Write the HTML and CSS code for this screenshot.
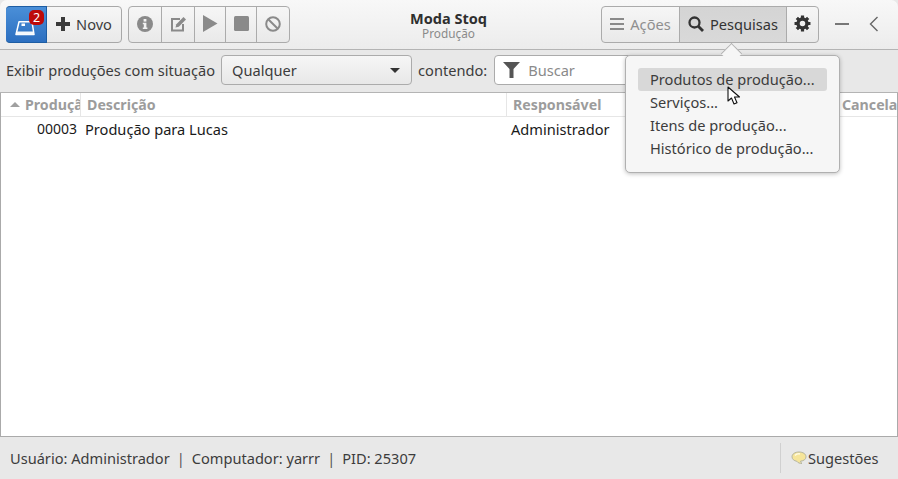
FILE: index.html
```html
<!DOCTYPE html>
<html lang="pt">
<head>
<meta charset="utf-8">
<title>Moda Stoq</title>
<link rel="stylesheet" href="styles.css">
</head>
<body>
<div class="window">
  <header class="titlebar">
    <div class="linked launcher">
      <button class="btn btn-blue" aria-label="Lançador">
        <svg width="20" height="16" viewBox="0 0 20 16" class="ico-launch"><path d="M4 1.800H17L19 14.500H1z" fill="none" stroke="#fff" stroke-width="1.500" stroke-linejoin="round"/><path d="M2 11.500H18V14.500H1.500z" fill="#f4f8fc"/><rect x="6.500" y="3.500" width="3.500" height="2.500" fill="#fff"/></svg>
        <span class="badge">2</span>
      </button>
      <button class="btn btn-new">
        <svg width="14" height="14" viewBox="0 0 14 14"><path d="M5 0h4v5h5v4H9v5H5V9H0V5h5z" fill="#3a3a3a"/></svg>
        <span>Novo</span>
      </button>
    </div>
    <div class="linked actions">
      <button class="btn a1" aria-label="Detalhes"><svg width="16" height="16" viewBox="0 0 16 16"><circle cx="8" cy="8" r="8" fill="#8a8a8a"/><rect x="6.600" y="3" width="2.800" height="2.600" fill="#f2f2f2"/><path d="M5.800 6.800H9.400V11.500H10.400V13H5.800V11.500H6.800V8.200H5.800z" fill="#f2f2f2"/></svg></button>
      <button class="btn a2" aria-label="Editar"><svg width="17" height="16" viewBox="0 0 17 16"><path d="M10 3H2v11.500h11V8" fill="none" stroke="#8a8a8a" stroke-width="2"/><path d="M5.500 11.500l.8-3.200L13.500 1l2.500 2.400-7.200 7.300z" fill="#8a8a8a"/></svg></button>
      <button class="btn a3" aria-label="Iniciar"><svg width="15" height="17" viewBox="0 0 15 17"><path d="M0 0L14.500 8.500L0 17z" fill="#8a8a8a"/></svg></button>
      <button class="btn a4" aria-label="Parar"><svg width="15" height="15" viewBox="0 0 15 15"><rect width="15" height="15" rx="1.500" fill="#8a8a8a"/></svg></button>
      <button class="btn a5" aria-label="Cancelar"><svg width="16" height="16" viewBox="0 0 16 16"><circle cx="8" cy="8" r="6.800" fill="none" stroke="#8a8a8a" stroke-width="2"/><path d="M3.200 3.200L12.800 12.800" stroke="#8a8a8a" stroke-width="2"/></svg></button>
    </div>
    <div class="title">
      <strong>Moda Stoq</strong>
      <span>Produção</span>
    </div>
    <div class="linked menus">
      <button class="btn m1"><svg width="14" height="12" viewBox="0 0 14 12"><path d="M0 1h14M0 6h14M0 11h14" stroke="#8a8a8a" stroke-width="2"/></svg><span class="dim">Ações</span></button>
      <button class="btn m2 active"><svg width="16" height="16" viewBox="0 0 16 16"><circle cx="6.500" cy="6.500" r="5" fill="none" stroke="#333" stroke-width="2.300"/><path d="M10 10l5 5" stroke="#333" stroke-width="2.800"/></svg><span>Pesquisas</span></button>
      <button class="btn m3" aria-label="Preferências"><svg width="17" height="17" viewBox="0 0 16 16"><circle cx="8" cy="8" r="4.200" fill="none" stroke="#333" stroke-width="3.200"/><path d="M8 .5V3.500M8 12.500V15.500M.5 8H3.500M12.500 8H15.500M2.700 2.700L4.800 4.800M11.200 11.200L13.300 13.300M13.300 2.700L11.200 4.800M4.800 11.200L2.700 13.300" fill="none" stroke="#333" stroke-width="3"/></svg></button>
    </div>
    <div class="winctl">
      <svg width="14" height="2" viewBox="0 0 14 2"><rect width="14" height="2" fill="#777"/></svg>
      <svg width="10" height="16" viewBox="0 0 10 16"><path d="M8.500 1L1.500 8l7 7" fill="none" stroke="#666" stroke-width="1.400"/></svg>
    </div>
  </header>

  <div class="filterbar">
    <label>Exibir produções com situação</label>
    <div class="combo"><span>Qualquer</span><i class="caret"></i></div>
    <label>contendo:</label>
    <div class="entry">
      <svg width="17" height="16" viewBox="0 0 17 16"><path d="M0 0H17L10.500 7V16H6.500V7z" fill="#555"/></svg>
      <span>Buscar</span>
    </div>
  </div>

  <div class="tree">
    <div class="tree-head">
      <div class="col c1"><i class="sort"></i><span class="clip">Produção</span></div>
      <div class="col c2"><span>Descrição</span></div>
      <div class="col c3"><span>Responsável</span></div>
      <div class="col c4"><span>Cancelada</span></div>
    </div>
    <div class="tree-row">
      <div class="cell c1 num">00003</div>
      <div class="cell c2">Produção para Lucas</div>
      <div class="cell c3">Administrador</div>
      <div class="cell c4"></div>
    </div>
  </div>

  <footer class="status">
    <div class="status-text">Usuário: Administrador<span class="bar">|</span>Computador: yarrr<span class="bar">|</span>PID: 25307</div>
    <div class="feedback">
      <svg width="16" height="14" viewBox="0 0 16 14"><path d="M8 1C4 1 1 3 1 5.800c0 2.200 2 4 4.800 4.500 1 1.500 3 2.200 5.200 2.200-.9-.6-1.400-1.400-1.500-2.300C13 9.900 15 8 15 5.800 15 3 12 1 8 1z" fill="#f6e59a" stroke="#b5b5a0"/><path d="M4 4.500c1-1.200 3-1.800 5-1.600" fill="none" stroke="#fffbe0" stroke-width="1.500"/></svg>
      <span>Sugestões</span>
    </div>
  </footer>

  <div class="popover">
    <i class="arrow"></i>
    <div class="pop-item hover">Produtos de produção...</div>
    <div class="pop-item">Serviços...</div>
    <div class="pop-item">Itens de produção...</div>
    <div class="pop-item">Histórico de produção...</div>
  </div>

  <svg class="cursor" width="14" height="20" viewBox="0 0 14 20"><path d="M1 1V15L4.500 12L7 18L10 16.700L7.500 11H12.500z" fill="#fff" stroke="#111" stroke-width="1.100" stroke-linejoin="round"/></svg>
</div>
</body>
</html>
```

FILE: styles.css
```css
* { box-sizing: border-box; }
html, body { margin: 0; padding: 0; }
body {
  width: 898px;
  height: 479px;
  overflow: hidden;
  background: #fff;
  font-family: "Noto Sans", "Open Sans", sans-serif;
  font-size: 14.600px;
  color: #3c3c3c;
}
.window {
  position: relative;
  width: 898px;
  height: 479px;
  display: flex;
  flex-direction: column;
  background: #e8e8e8;
  overflow: hidden;
}
.titlebar {
  height: 50px;
  flex: none;
  display: flex;
  align-items: flex-start;
  padding: 6px 0 0 6px;
  border-bottom: 1px solid #b4b4b4;
  border-radius: 7px 7px 0 0;
  background: linear-gradient(#f8f8f8, #ececec);
}
.linked {
  display: flex;
  height: 37px;
  border: 1px solid #ababab;
  border-radius: 4px;
  overflow: hidden;
  background: linear-gradient(#f6f6f6, #e9e9e9);
}
.btn {
  height: 100%;
  padding: 0 0 2px;
  margin: 0;
  border: 0;
  border-left: 1px solid #ababab;
  background: transparent;
  display: flex;
  align-items: center;
  justify-content: center;
  gap: 6px;
  font: inherit;
  color: inherit;
}
.btn:first-child { border-left: 0; }
.launcher { width: 116px; border-color: #a8a8a8; overflow: visible; position: relative; }
.btn-blue {
  width: 41px;
  position: relative;
  margin: -1px 0 -1px -1px;
  height: 37px;
  padding: 0;
  border: 1px solid #1d5da3;
  border-radius: 4px 0 0 4px;
  background: linear-gradient(#4a8fd8, #2c6fc0);
}
.ico-launch { margin: 6px 3px 0 0; }
.badge {
  position: absolute;
  left: 23px;
  top: 3px;
  width: 15px;
  height: 15px;
  border-radius: 5px;
  background: #bd0a0a;
  color: #fff;
  font-size: 12.500px;
  line-height: 15px;
  text-align: center;
}
.btn-new { flex: 1; border-left: 0; gap: 6px; }
.actions { margin-left: 6px; width: 162px; }
.a1 { width: 32px; }
.a2 { width: 33px; }
.a3 { width: 31px; }
.a4 { width: 31px; }
.a5 { width: 33px; }
.title {
  flex: 1;
  display: flex;
  flex-direction: column;
  align-items: center;
  padding: 4px 0 0 6px;
}
.title strong { font-size: 14.500px; line-height: 16px; color: #2f2f2f; }
.title span { font-size: 11.800px; line-height: 14px; color: #8a8a8a; }
.menus { width: 218px; }
.m1 { width: 77px; }
.m2 { width: 107px; gap: 6px; }
.m3 { flex: 1; }
.dim { color: #8f8f8f; }
.active { background: linear-gradient(#d4d4d4, #d9d9d9); color: #333; }
.winctl {
  width: 79px;
  height: 36px;
  display: flex;
  align-items: center;
  gap: 20px;
  padding-left: 16px;
}
.filterbar {
  height: 43px;
  flex: none;
  display: flex;
  align-items: center;
  padding: 0 0 2px 6px;
  gap: 6px;
  border-bottom: 1px solid #b4b4b4;
}
.filterbar label { white-space: nowrap; }
.combo {
  width: 191px;
  height: 30px;
  padding: 0 11px 0 10px;
  display: flex;
  align-items: center;
  justify-content: space-between;
  border: 1px solid #ababab;
  border-radius: 4px;
  background: linear-gradient(#f6f6f6, #e8e8e8);
}
.caret {
  border: 5px solid transparent;
  border-top: 5px solid #333;
  border-bottom: 0;
}
.entry {
  width: 300px;
  height: 30px;
  margin-left: 1px;
  padding-left: 8px;
  display: flex;
  align-items: center;
  gap: 8px;
  border: 1px solid #ababab;
  border-radius: 4px;
  background: #fff;
  color: #8a8a8a;
}
.tree {
  flex: 1;
  background: #fff;
  border-left: 1px solid #aaa;
  border-right: 1px solid #aaa;
  border-bottom: 1px solid #aaa;
}
.tree-head, .tree-row {
  display: grid;
  grid-template-columns: 79px 426px 329px 1fr;
}
.tree-head { height: 24px; border-bottom: 1px solid #e6e6e6; }
.col {
  height: 23px;
  padding-left: 6px;
  display: flex;
  align-items: center;
  gap: 5px;
  overflow: hidden;
  white-space: nowrap;
  font-weight: 700;
  font-size: 14.200px;
  color: #9c9c9c;
  border-left: 1px solid #e6e6e6;
}
.col.c1 { border-left: 0; padding-left: 9px; }
.sort {
  flex: none;
  border: 5px solid transparent;
  border-bottom: 5px solid #a0a0a0;
  border-top: 0;
}
.tree-row { height: 25px; color: #1a1a1a; align-items: center; padding-bottom: 2px; }
.cell { padding-left: 5px; white-space: nowrap; }
.num { text-align: right; padding-right: 3px; font-size: 14px; }
.cell.c3 { padding-left: 5px; }
.status {
  height: 42px;
  flex: none;
  display: flex;
  align-items: center;
  justify-content: space-between;
  padding-left: 10px;
  background: #e8e8e8;
}
.bar { margin: 0 7px; color: #555; }
.feedback {
  height: 30px;
  width: 118px;
  padding-left: 10px;
  display: flex;
  align-items: center;
  gap: 1px;
  border-left: 1px solid #d0d0d0;
}
.popover {
  position: absolute;
  left: 625px;
  top: 55px;
  width: 215px;
  height: 118px;
  padding: 12px 12px 0;
  background: #f6f6f6;
  border: 1px solid #b0b0b0;
  border-radius: 5px;
  box-shadow: 0 1px 4px rgba(0, 0, 0, .25);
}
.arrow {
  position: absolute;
  left: 98px;
  top: -10px;
  width: 15px;
  height: 15px;
  background: #f6f6f6;
  border-left: 1px solid #b0b0b0;
  border-top: 1px solid #b0b0b0;
  transform: rotate(45deg);
}
.pop-item {
  position: relative;
  height: 23px;
  line-height: 22px;
  padding-left: 12px;
  border-radius: 3px;
  white-space: nowrap;
}
.pop-item.hover { background: #d8d8d8; }
.cursor { position: absolute; left: 727px; top: 86px; }
```
